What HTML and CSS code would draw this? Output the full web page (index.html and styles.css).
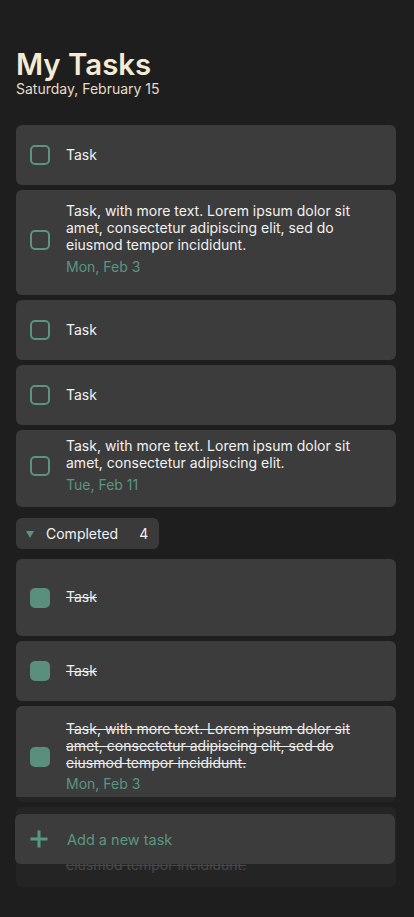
FILE: index.html
```html
<!DOCTYPE html>
<html lang="en">
<head>
<meta charset="utf-8">
<title>My Tasks</title>
<link rel="stylesheet" href="styles.css">
</head>
<body>
<div class="app">
  <header class="header">
    <h1 class="title">My Tasks</h1>
    <p class="subtitle">Saturday, February 15</p>
  </header>

  <main class="list">
    <div class="card card--single">
      <span class="check"></span>
      <div class="body"><p class="text">Task</p></div>
    </div>
    <div class="card card--three">
      <span class="check"></span>
      <div class="body">
        <p class="text">Task, with more text. Lorem ipsum dolor sit amet, consectetur adipiscing elit, sed do eiusmod tempor incididunt.</p>
        <p class="date">Mon, Feb 3</p>
      </div>
    </div>
    <div class="card card--single">
      <span class="check"></span>
      <div class="body"><p class="text">Task</p></div>
    </div>
    <div class="card card--single">
      <span class="check"></span>
      <div class="body"><p class="text">Task</p></div>
    </div>
    <div class="card card--two">
      <span class="check"></span>
      <div class="body">
        <p class="text">Task, with more text. Lorem ipsum dolor sit amet, consectetur adipiscing elit.</p>
        <p class="date">Tue, Feb 11</p>
      </div>
    </div>

    <div class="section">
      <button class="toggle">
        <span class="tri"></span>
        <span class="toggle-label">Completed</span>
        <span class="toggle-count">4</span>
      </button>
    </div>

    <div class="card card--tall-single">
      <span class="check check--done"></span>
      <div class="body"><p class="text text--done">Task</p></div>
    </div>
    <div class="card card--single">
      <span class="check check--done"></span>
      <div class="body"><p class="text text--done">Task</p></div>
    </div>
    <div class="card card--done-three">
      <span class="check check--done"></span>
      <div class="body">
        <p class="text text--done">Task, with more text. Lorem ipsum dolor sit amet, consectetur adipiscing elit, sed do eiusmod tempor incididunt.</p>
        <p class="date">Mon, Feb 3</p>
      </div>
    </div>
    <div class="card card--clipped">
      <span class="check check--done"></span>
      <div class="body">
        <p class="text text--done">Task, with more text. Lorem ipsum dolor sit amet, consectetur adipiscing elit, sed do eiusmod tempor incididunt.</p>
      </div>
    </div>
  </main>

  <footer class="footer">
    <div class="add">
      <svg class="plus" width="18" height="18" viewBox="0 0 18 18" aria-hidden="true">
        <path d="M9 0.5V17.5M0.5 9H17.5" stroke="#5a9782" stroke-width="3" fill="none"/>
      </svg>
      <span class="add-label">Add a new task</span>
    </div>
  </footer>
</div>
</body>
</html>
```
FILE: styles.css
```css
* { box-sizing: border-box; }

html, body {
  margin: 0;
  padding: 0;
}

body {
  background: #1e1e1e;
  font-family: Inter, "Noto Sans", "Liberation Sans", sans-serif;
  color: #f0f0f0;
  width: 414px;
  height: 917px;
  overflow: hidden;
}

.app {
  position: relative;
  height: 917px;
  padding: 50px 18px 0 16px;
}

.header {
  display: flex;
  flex-direction: column;
}

.title {
  margin: 0;
  font-size: 29.4px;
  line-height: 29px;
  font-weight: 600;
  color: #f4ebd4;
  letter-spacing: 0;
}

.subtitle {
  margin: 2px 0 0;
  font-size: 14px;
  line-height: 16px;
  color: #e5dcc6;
}

.list {
  margin-top: 28px;
  display: flex;
  flex-direction: column;
  gap: 5px;
}

.card {
  display: flex;
  align-items: center;
  gap: 16px;
  background: #3c3c3c;
  border-radius: 6px;
  padding: 0 16px 0 14px;
}

.card--single { height: 60px; }
.card--tall-single { height: 77px; }
.card--three { padding-top: 13px; padding-bottom: 19px; height: 105px; }
.card--two { padding-top: 8px; padding-bottom: 13px; height: 77px; }
.card--done-three { padding-top: 15px; padding-bottom: 9px; height: 96px; }
.card--clipped {
  height: 80px;
  align-items: flex-start;
  padding-top: 16px;
  overflow: hidden;
}
.card--clipped .check { margin-top: 20px; }

.check {
  flex: none;
  width: 20px;
  height: 20px;
  border: 2px solid #5a9482;
  border-radius: 5px;
}

.check--done {
  background: #5a8f7e;
  border-color: #5a8f7e;
}

.body {
  flex: 1;
  min-width: 0;
}

.text {
  margin: 0;
  font-size: 14px;
  line-height: 16.8px;
  color: #f2f2f2;
}

.text--done {
  text-decoration: line-through;
  text-decoration-thickness: 1px;
  color: #ececec;
}

.date {
  margin: 5px 0 0;
  font-size: 14px;
  line-height: 16.8px;
  color: #5a9682;
}

.section {
  display: flex;
  padding: 5.5px 0;
}

.toggle {
  display: inline-flex;
  align-items: center;
  height: 31px;
  width: 143px;
  padding: 0 0 0 10px;
  border: 0;
  border-radius: 6px;
  background: #3a3a3a;
  font-family: inherit;
  cursor: pointer;
}

.tri {
  width: 0;
  height: 0;
  border-left: 4px solid transparent;
  border-right: 4px solid transparent;
  border-top: 7px solid #5a9482;
  margin-top: 2px;
}

.toggle-label {
  margin-left: 12px;
  font-size: 14px;
  color: #f2f2f2;
}

.toggle-count {
  margin-left: 21px;
  font-size: 14px;
  color: #f2f2f2;
}

.footer {
  position: absolute;
  left: 0;
  right: 0;
  top: 797px;
  bottom: 0;
  background: rgba(30, 30, 30, 0.8);
  padding: 17px 19px 0 15px;
}

.add {
  display: flex;
  align-items: center;
  height: 50px;
  background: #3c3c3c;
  border-radius: 6px;
  padding-left: 15px;
  gap: 19px;
}

.plus { flex: none; }

.add-label {
  font-size: 14.5px;
  color: #5a9782;
}
```
